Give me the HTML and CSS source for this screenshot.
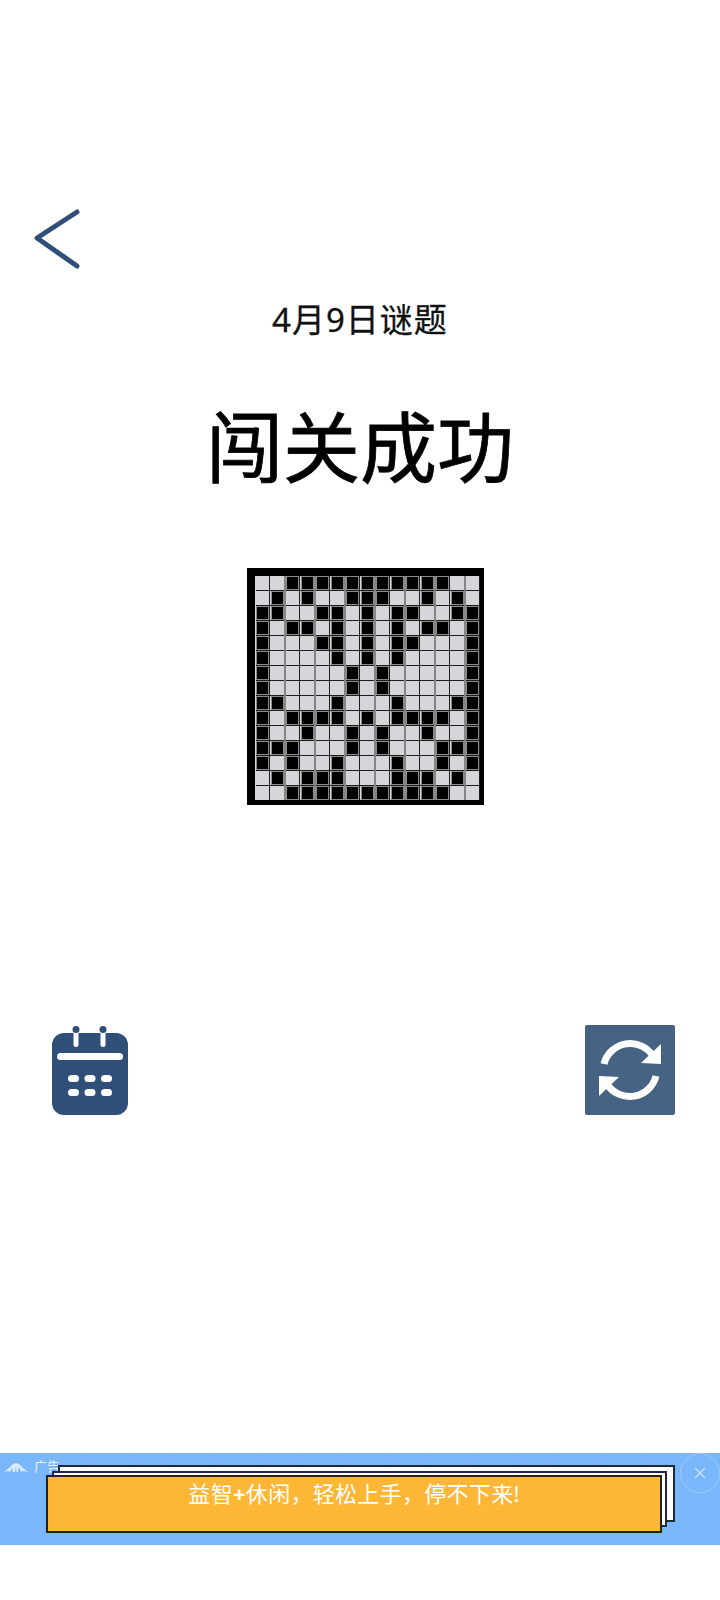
FILE: index.html
```html
<!DOCTYPE html>
<html lang="zh-CN">
<head>
    <meta charset="UTF-8">
    <meta name="viewport" content="width=device-width, initial-scale=1.0">
    <link rel="stylesheet" href="styles.css">
    <title>闯关成功</title>
</head>
<body>
    <div class="top-bar">
        <svg class="back-icon" viewBox="0 0 50 64" width="50" height="64">
            <path d="M45 6 L5 32 L45 60" fill="none" stroke="#2f4f78" stroke-width="5" stroke-linecap="round" stroke-linejoin="round"/>
        </svg>
    </div>

    <div class="puzzle-date">4月9日谜题</div>
    <h1 class="result-title">闯关成功</h1>

    <div class="board">
        <!-- row 1 -->
        <div></div><div></div><div class="on"></div><div class="on"></div><div class="on"></div><div class="on"></div><div class="on"></div><div class="on"></div><div class="on"></div><div class="on"></div><div class="on"></div><div class="on"></div><div class="on"></div><div></div><div></div>
        <div></div><div class="on"></div><div></div><div class="on"></div><div></div><div></div><div class="on"></div><div class="on"></div><div class="on"></div><div></div><div></div><div class="on"></div><div></div><div class="on"></div><div></div>
        <div class="on"></div><div class="on"></div><div></div><div></div><div class="on"></div><div class="on"></div><div></div><div class="on"></div><div></div><div class="on"></div><div class="on"></div><div></div><div></div><div class="on"></div><div class="on"></div>
        <div class="on"></div><div></div><div class="on"></div><div class="on"></div><div></div><div class="on"></div><div></div><div class="on"></div><div></div><div class="on"></div><div></div><div class="on"></div><div class="on"></div><div></div><div class="on"></div>
        <div class="on"></div><div></div><div></div><div></div><div class="on"></div><div class="on"></div><div></div><div class="on"></div><div></div><div class="on"></div><div class="on"></div><div></div><div></div><div></div><div class="on"></div>
        <!-- row 6 -->
        <div class="on"></div><div></div><div></div><div></div><div></div><div class="on"></div><div></div><div class="on"></div><div></div><div class="on"></div><div></div><div></div><div></div><div></div><div class="on"></div>
        <div class="on"></div><div></div><div></div><div></div><div></div><div></div><div class="on"></div><div></div><div class="on"></div><div></div><div></div><div></div><div></div><div></div><div class="on"></div>
        <div class="on"></div><div></div><div></div><div></div><div></div><div></div><div class="on"></div><div></div><div class="on"></div><div></div><div></div><div></div><div></div><div></div><div class="on"></div>
        <div class="on"></div><div class="on"></div><div></div><div></div><div></div><div class="on"></div><div></div><div></div><div></div><div class="on"></div><div></div><div></div><div></div><div class="on"></div><div class="on"></div>
        <div class="on"></div><div></div><div class="on"></div><div class="on"></div><div class="on"></div><div class="on"></div><div></div><div class="on"></div><div></div><div class="on"></div><div class="on"></div><div class="on"></div><div class="on"></div><div></div><div class="on"></div>
        <!-- row 11 -->
        <div class="on"></div><div></div><div></div><div class="on"></div><div></div><div></div><div class="on"></div><div></div><div class="on"></div><div></div><div></div><div class="on"></div><div></div><div></div><div class="on"></div>
        <div class="on"></div><div class="on"></div><div class="on"></div><div></div><div></div><div></div><div class="on"></div><div></div><div class="on"></div><div></div><div></div><div></div><div class="on"></div><div class="on"></div><div class="on"></div>
        <div class="on"></div><div></div><div class="on"></div><div></div><div></div><div class="on"></div><div></div><div></div><div></div><div class="on"></div><div></div><div></div><div class="on"></div><div></div><div class="on"></div>
        <div></div><div class="on"></div><div></div><div class="on"></div><div class="on"></div><div class="on"></div><div></div><div></div><div></div><div class="on"></div><div class="on"></div><div class="on"></div><div></div><div class="on"></div><div></div>
        <div></div><div></div><div class="on"></div><div class="on"></div><div class="on"></div><div class="on"></div><div class="on"></div><div class="on"></div><div class="on"></div><div class="on"></div><div class="on"></div><div class="on"></div><div class="on"></div><div></div><div></div>
    </div>

    <div class="actions">
        <!-- calendar button -->
        <svg viewBox="0 0 76 90" width="76" height="90">
            <rect x="0" y="8" width="76" height="82" rx="12" fill="#2f4f78"/>
            <rect x="21.5" y="4" width="5" height="18" rx="2.5" fill="#fff"/>
            <rect x="48.5" y="4" width="5" height="18" rx="2.5" fill="#fff"/>
            <circle cx="24" cy="4.5" r="3.5" fill="#2f4f78"/>
            <circle cx="51" cy="4.5" r="3.5" fill="#2f4f78"/>
            <rect x="5" y="28" width="66" height="7" rx="3.5" fill="#fff"/>
            <rect x="16" y="50" width="11" height="7" rx="3.5" fill="#fff"/>
            <rect x="32.5" y="50" width="11" height="7" rx="3.5" fill="#fff"/>
            <rect x="49" y="50" width="11" height="7" rx="3.5" fill="#fff"/>
            <rect x="16" y="64" width="11" height="7" rx="3.5" fill="#fff"/>
            <rect x="32.5" y="64" width="11" height="7" rx="3.5" fill="#fff"/>
            <rect x="49" y="64" width="11" height="7" rx="3.5" fill="#fff"/>
        </svg>
        <!-- restart button -->
        <svg viewBox="0 0 90 90" width="90" height="90">
            <rect width="90" height="90" rx="2" fill="#466384"/>
            <path d="M19 39 A27 27 0 0 1 68 31" fill="none" stroke="#fff" stroke-width="7"/>
            <path d="M76 19 L76 39 L56 38 Z" fill="#fff"/>
            <g transform="rotate(180 45 45)">
                <path d="M19 39 A27 27 0 0 1 68 31" fill="none" stroke="#fff" stroke-width="7"/>
                <path d="M76 19 L76 39 L56 38 Z" fill="#fff"/>
            </g>
        </svg>
    </div>

    <div class="ad-banner">
        <svg class="ad-logo" viewBox="0 0 24 9" width="24" height="9">
            <path d="M0 9 L5 5 L9 1 L12 0 L15 1 L19 5 L24 9 L19 8 L17 9 L15 4 L14 9 L12.5 9 L12 3 L11 9 L9 9 L8 5 L6 9 L4 8 Z" fill="#dcebfd"/>
        </svg>
        <span class="ad-label">广告</span>
        <div class="ad-sheet ad-sheet-back"></div>
        <div class="ad-sheet ad-sheet-mid"></div>
        <div class="ad-sheet ad-sheet-front">益智<b>+</b>休闲，轻松上手，停不下来!</div>
        <div class="ad-close">
            <svg viewBox="0 0 12 12" width="12" height="12">
                <path d="M1 1 L11 11 M11 1 L1 11" stroke="#cfe3fc" stroke-width="1.2" fill="none"/>
            </svg>
        </div>
    </div>
</body>
</html>
```

FILE: styles.css
```css
* {
    margin: 0;
    padding: 0;
    box-sizing: border-box;
}

body {
    width: 720px;
    height: 1600px;
    background-color: #fff;
    font-family: "Noto Sans", "Noto Sans CJK SC", sans-serif;
    color: #111;
    overflow: hidden;
}

.top-bar {
    height: 298px;
    padding: 206px 0 0 32px;
}

.back-icon {
    display: block;
}

.puzzle-date {
    height: 78px;
    line-height: 44px;
    font-size: 33px;
    letter-spacing: 1px;
    text-align: center;
    -webkit-text-stroke: 0.3px #111;
}

.result-title {
    height: 192px;
    line-height: 144px;
    font-size: 77px;
    font-weight: 400;
    color: #000;
    text-align: center;
    -webkit-text-stroke: 0.8px #000;
}

/* black frame, thicker on the top and left, with the 15x15 cells inside */
.board {
    display: grid;
    grid-template-columns: repeat(15, 15px);
    grid-template-rows: repeat(15, 15px);
    width: 237px;
    height: 237px;
    margin-left: 247px;
    border-style: solid;
    border-color: #000;
    border-width: 8px 4px 5px 8px;
    background-color: #d6d6da;
    background-image:
        repeating-linear-gradient(to right, #858585 0 1px, transparent 1px 14px, #1c1c1c 14px 15px, transparent 15px 29px, #858585 29px 30px),
        repeating-linear-gradient(to bottom, transparent 0 14px, #1c1c1c 14px 15px);
    box-shadow: inset 1px 0 0 #d6d6da;
}

.board .on {
    margin: 0 1px 1px 1px;
    background-color: #000;
    border: 1px solid #8c8c8c;
}

.actions {
    display: flex;
    justify-content: space-between;
    align-items: flex-start;
    margin-top: 220px;
    padding: 0 45px 0 52px;
}

.actions svg {
    display: block;
}

.ad-banner {
    position: relative;
    height: 92px;
    margin-top: 338px;
    background-color: #7ab6fa;
    background-image: repeating-linear-gradient(to right, transparent 0 42px, rgba(255, 255, 255, 0.04) 42px 43px);
}

.ad-logo {
    position: absolute;
    left: 4px;
    top: 10px;
}

.ad-label {
    position: absolute;
    left: 34px;
    top: 4px;
    font-size: 13px;
    line-height: 18px;
    color: #e6f1fe;
}

.ad-sheet {
    position: absolute;
    border: 2px solid #1f2a38;
    background-color: #fff;
}

.ad-sheet-back {
    left: 58px;
    top: 12px;
    width: 617px;
    height: 57px;
}

.ad-sheet-mid {
    left: 52px;
    top: 18px;
    width: 615px;
    height: 56px;
}

.ad-sheet-front {
    left: 46px;
    top: 22px;
    width: 616px;
    height: 58px;
    border-color: #222;
    background-color: #fdb636;
    color: #fff;
    font-size: 22px;
    line-height: 32px;
    letter-spacing: 0.3px;
    text-align: center;
}

.ad-close {
    position: absolute;
    right: 0;
    top: 0;
    display: flex;
    justify-content: center;
    align-items: center;
    width: 40px;
    height: 40px;
    border: 1px solid rgba(255, 255, 255, 0.25);
    border-radius: 50%;
}
```
